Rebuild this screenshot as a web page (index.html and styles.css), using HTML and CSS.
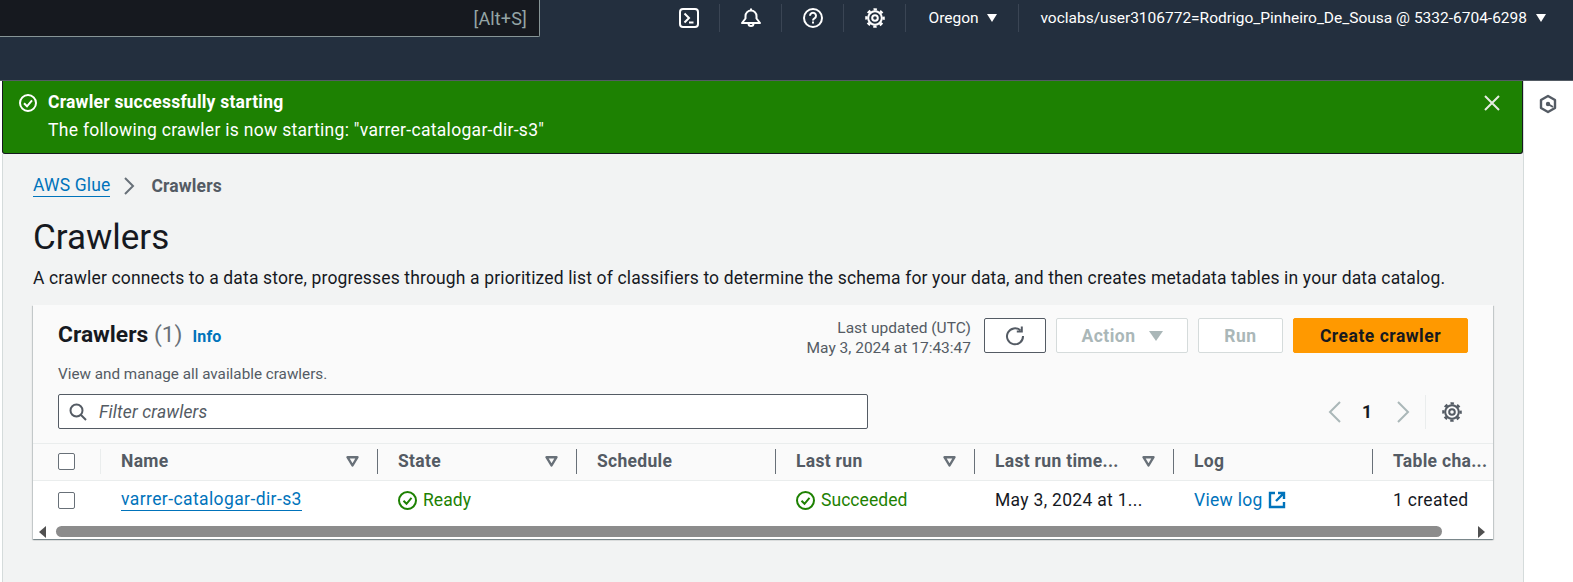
FILE: index.html
```html
<!DOCTYPE html>
<html lang="en">
<head>
    <meta charset="UTF-8">
    <meta name="viewport" content="width=device-width, initial-scale=1.0">
    <title>Crawlers | AWS Glue</title>
    <link rel="stylesheet" href="styles.css">
</head>
<body>

    <!-- Top nav -->
    <header class="top-nav">
        <div class="search-box"><span>[Alt+S]</span></div>
        <nav class="nav-items">
            <div class="nav-icon">
                <svg width="20" height="20" viewBox="0 0 20 20" fill="none" stroke="#fff" stroke-width="2"><rect x="1" y="1" width="18" height="18" rx="3"/><path d="M5.500 5.500l4.500 4.500-4.500 4.500M10 14.500h4.500"/></svg>
            </div>
            <div class="nav-icon">
                <svg width="20" height="20" viewBox="0 0 20 20" fill="none" stroke="#fff" stroke-width="2"><path d="M1 15h18l-3.500-4.500V8a5.500 5.500 0 0 0-11 0v2.500z" stroke-linejoin="round"/><path d="M7.500 15.500a2.500 2.500 0 0 0 5 0M10 .5v2"/></svg>
            </div>
            <div class="nav-icon">
                <svg width="20" height="20" viewBox="0 0 20 20" fill="none" stroke="#fff" stroke-width="2"><circle cx="10" cy="10" r="9"/><path d="M7 7.800a3 3 0 1 1 4.500 2.600c-1 .6-1.500 1.100-1.500 2.100"/><path d="M10 13.600v1.800"/></svg>
            </div>
            <div class="nav-icon">
                <svg width="20" height="20" viewBox="0 0 20 20" fill="none" stroke="#fff"><circle cx="10" cy="10" r="6.800" stroke-width="2"/><circle cx="10" cy="10" r="2.800" stroke-width="2"/><circle cx="10" cy="10" r="8.600" stroke-width="2.400" stroke-dasharray="3.400 3.350" stroke-dashoffset="1.700"/></svg>
            </div>
            <div class="nav-menu region">Oregon <span class="caret"></span></div>
            <div class="nav-menu account">voclabs/user3106772=Rodrigo_Pinheiro_De_Sousa @ 5332-6704-6298 <span class="caret"></span></div>
        </nav>
    </header>

    <div class="page">
        <div class="main-column">

            <!-- Flash message -->
            <div class="flash">
                <svg class="flash-icon" width="18" height="18" viewBox="0 0 18 18" fill="none" stroke="#fff" stroke-width="2"><circle cx="9" cy="9" r="8"/><path d="M5 9.300l3 3 5-6"/></svg>
                <div class="flash-text">
                    <div class="flash-title">Crawler successfully starting</div>
                    <div class="flash-body">The following crawler is now starting: "varrer-catalogar-dir-s3"</div>
                </div>
                <svg class="flash-close" width="16" height="16" viewBox="0 0 16 16" fill="none" stroke="#e6ece3" stroke-width="2"><path d="M1 1l14 14M15 1L1 15"/></svg>
            </div>

            <main class="content">
                <div class="breadcrumbs">
                    <a href="#" class="crumb-link">AWS Glue</a>
                    <svg width="12" height="18" viewBox="0 0 12 18" fill="none" stroke="#687078" stroke-width="2"><path d="M2 1l8 8-8 8"/></svg>
                    <span class="crumb-current">Crawlers</span>
                </div>

                <h1>Crawlers</h1>
                <p class="page-desc">A crawler connects to a data store, progresses through a prioritized list of classifiers to determine the schema for your data, and then creates metadata tables in your data catalog.</p>

                <section class="card">
                    <div class="card-head">
                        <div class="card-title-row">
                            <div class="card-title">
                                <h2>Crawlers <span class="count">(1)</span></h2>
                                <a href="#" class="info">Info</a>
                            </div>
                            <div class="card-actions">
                                <div class="updated">Last updated (UTC)<br>May 3, 2024 at 17:43:47</div>
                                <button class="btn btn-refresh" type="button">
                                    <svg width="20" height="20" viewBox="0 0 20 20" fill="none" stroke="#545b64" stroke-width="2"><path d="M15.500 4.500A8 8 0 1 0 18 10"/><path d="M16.800 .5v5h-5"/></svg>
                                </button>
                                <button class="btn btn-disabled btn-action" type="button">Action <span class="caret caret-grey"></span></button>
                                <button class="btn btn-disabled btn-run" type="button">Run</button>
                                <button class="btn btn-primary" type="button">Create crawler</button>
                            </div>
                        </div>
                        <div class="card-desc">View and manage all available crawlers.</div>
                        <div class="filter-row">
                            <div class="filter">
                                <svg width="18" height="18" viewBox="0 0 18 18" fill="none" stroke="#545b64" stroke-width="2"><circle cx="7.500" cy="7.500" r="6"/><path d="M12 12l5 5"/></svg>
                                <span>Filter crawlers</span>
                            </div>
                            <div class="pager">
                                <svg width="14" height="22" viewBox="0 0 14 22" fill="none" stroke="#aab7b8" stroke-width="2"><path d="M12 1L2 11l10 10"/></svg>
                                <span class="page-num">1</span>
                                <svg width="14" height="22" viewBox="0 0 14 22" fill="none" stroke="#aab7b8" stroke-width="2"><path d="M2 1l10 10L2 21"/></svg>
                                <div class="pager-settings">
                                    <svg width="20" height="20" viewBox="0 0 20 20" fill="none" stroke="#545b64"><circle cx="10" cy="10" r="6.800" stroke-width="2"/><circle cx="10" cy="10" r="2.800" stroke-width="2"/><circle cx="10" cy="10" r="8.600" stroke-width="2.400" stroke-dasharray="3.400 3.350" stroke-dashoffset="1.700"/></svg>
                                </div>
                            </div>
                        </div>
                    </div>

                    <div class="table-wrap">
                        <div class="row row-head">
                            <div class="cell cell-check"><span class="checkbox"></span></div>
                            <div class="cell cell-name">Name <svg class="sort" width="13" height="11" viewBox="0 0 13 11" fill="none" stroke="#687078" stroke-width="2.400"><path d="M1.500 1.200h10l-5 8.300z" stroke-linejoin="round"/></svg></div>
                            <div class="cell">State <svg class="sort" width="13" height="11" viewBox="0 0 13 11" fill="none" stroke="#687078" stroke-width="2.400"><path d="M1.500 1.200h10l-5 8.300z" stroke-linejoin="round"/></svg></div>
                            <div class="cell">Schedule</div>
                            <div class="cell">Last run <svg class="sort" width="13" height="11" viewBox="0 0 13 11" fill="none" stroke="#687078" stroke-width="2.400"><path d="M1.500 1.200h10l-5 8.300z" stroke-linejoin="round"/></svg></div>
                            <div class="cell">Last run time... <svg class="sort" width="13" height="11" viewBox="0 0 13 11" fill="none" stroke="#687078" stroke-width="2.400"><path d="M1.500 1.200h10l-5 8.300z" stroke-linejoin="round"/></svg></div>
                            <div class="cell">Log</div>
                            <div class="cell cell-last">Table cha...</div>
                        </div>
                        <div class="row row-body">
                            <div class="cell cell-check"><span class="checkbox"></span></div>
                            <div class="cell cell-name"><a href="#" class="crawler-link">varrer-catalogar-dir-s3</a></div>
                            <div class="cell status">
                                <svg width="19" height="19" viewBox="0 0 19 19" fill="none" stroke="#1d8102" stroke-width="2"><circle cx="9.500" cy="9.500" r="8.500"/><path d="M5.500 9.800l3 3 5-6"/></svg>
                                Ready
                            </div>
                            <div class="cell"></div>
                            <div class="cell status">
                                <svg width="19" height="19" viewBox="0 0 19 19" fill="none" stroke="#1d8102" stroke-width="2"><circle cx="9.500" cy="9.500" r="8.500"/><path d="M5.500 9.800l3 3 5-6"/></svg>
                                Succeeded
                            </div>
                            <div class="cell">May 3, 2024 at 1...</div>
                            <div class="cell">
                                <a href="#" class="log-link">View log
                                    <svg width="18" height="18" viewBox="0 0 18 18" fill="none" stroke="#0073bb" stroke-width="2.400"><path d="M7 2H2v14h14v-5"/><path d="M10 2h6v6M16 2L8 10"/></svg>
                                </a>
                            </div>
                            <div class="cell cell-last">1 created</div>
                        </div>
                        <div class="scroll-bar">
                            <span class="arrow arrow-left"></span>
                            <span class="thumb"></span>
                            <span class="arrow arrow-right"></span>
                        </div>
                    </div>
                </section>
            </main>
        </div>

        <!-- Right tools rail -->
        <aside class="tools-rail">
            <svg width="18" height="20" viewBox="0 0 18 20" fill="none" stroke="#545b64" stroke-width="2.400"><path d="M9 2l7 4v8l-7 4-7-4V6z" stroke-linejoin="round"/><circle cx="9" cy="10" r="2.200" fill="#545b64" stroke="none"/><path d="M9 10l5 3" stroke-width="2"/></svg>
        </aside>
    </div>

</body>
</html>
```

FILE: styles.css
```css
* {
    box-sizing: border-box;
}

html, body {
    height: 582px;
    overflow: hidden;
}

body {
    margin: 0;
    background: #fff;
    color: #16191f;
    font-family: Roboto, "Liberation Sans", sans-serif;
    font-size: 17.500px;
    letter-spacing: 0.15px;
}

a {
    color: #0073bb;
    text-decoration: none;
}

/* Top nav */
.top-nav {
    display: flex;
    justify-content: space-between;
    align-items: flex-start;
    height: 81px;
    background: #232f3e;
    border-bottom: 1px solid #545b64;
}

.search-box {
    display: flex;
    align-items: center;
    justify-content: flex-end;
    width: 540px;
    height: 37px;
    padding-right: 12px;
    background: #16191f;
    border-right: 1px solid #879596;
    border-bottom: 1px solid #879596;
    border-bottom-right-radius: 2px;
    color: #95a5a6;
    font-size: 18px;
}

.nav-items {
    display: flex;
    align-items: center;
    height: 36px;
    color: #fff;
    font-size: 15.500px;
    letter-spacing: 0;
}

.nav-icon {
    display: flex;
    align-items: center;
    justify-content: center;
    width: 62px;
    height: 28px;
    border-right: 1px solid #3a4554;
}

.nav-menu {
    display: flex;
    align-items: center;
    height: 28px;
    white-space: nowrap;
}

.region {
    gap: 8px;
    width: 113px;
    padding-left: 22px;
    border-right: 1px solid #3a4554;
}

.account {
    gap: 9px;
    padding: 0 27px 0 21px;
}

.caret {
    display: inline-block;
    width: 0;
    height: 0;
    border-left: 5px solid transparent;
    border-right: 5px solid transparent;
    border-top: 8px solid #fff;
}

.caret-grey {
    border-left-width: 7px;
    border-right-width: 7px;
    border-top: 10px solid #aab7b8;
    margin-left: 13px;
}

/* Page */
.page {
    display: flex;
    height: 501px;
}

.main-column {
    flex: 1;
    min-width: 0;
    padding-left: 2px;
}

.tools-rail {
    display: flex;
    justify-content: center;
    width: 50px;
    padding: 13px 2px 0 0;
    border-left: 1px solid #d5dbdb;
}

.flash {
    display: flex;
    align-items: flex-start;
    height: 73px;
    padding: 7px 22px 0 16px;
    background: #1d8102;
    border: 1px solid #16191f;
    border-top: 0;
    border-radius: 0 0 3px 3px;
    color: #fff;
    line-height: 28px;
}

.flash-icon {
    flex: none;
    margin: 6px 11px 0 0;
}

.flash-text {
    flex: 1;
}

.flash-title {
    font-weight: 700;
    letter-spacing: 0.22px;
}

.flash-body {
    letter-spacing: 0.3px;
}

.flash-close {
    flex: none;
    margin-top: 7px;
}

.content {
    height: 428px;
    padding: 20px 30px 0 30px;
    background: #f2f3f3;
    border-left: 1px solid #d5dbdb;
}

.breadcrumbs {
    display: flex;
    align-items: center;
    gap: 13px;
    height: 24px;
}

.crumb-link {
    border-bottom: 1px solid #0073bb;
    line-height: 21px;
}

.crumb-current {
    margin-left: 3px;
    color: #545b64;
    font-weight: 700;
}

h1 {
    margin: 18px 0 0;
    font-size: 35px;
    font-weight: 400;
    line-height: 44px;
    letter-spacing: 0;
}

.page-desc {
    margin: 6px 0 0;
    color: #16191f;
    line-height: 24px;
    white-space: nowrap;
}

/* Card */
.card {
    margin-top: 15px;
    height: 234px;
    background: #fafafa;
    box-shadow: 0 1px 1px 0 rgba(0, 28, 36, 0.3), 1px 1px 1px 0 rgba(0, 28, 36, 0.15), -1px 1px 1px 0 rgba(0, 28, 36, 0.15);
    overflow: hidden;
}

.card-head {
    height: 138px;
    padding: 13px 25px 0 25px;
}

.card-title-row {
    display: flex;
    justify-content: space-between;
    align-items: flex-start;
    height: 46px;
}

.card-title {
    display: flex;
    align-items: baseline;
    gap: 10px;
    padding-top: 2px;
}

h2 {
    margin: 0;
    font-size: 22.800px;
    font-weight: 700;
    line-height: 30px;
    letter-spacing: 0;
}

.count {
    color: #687078;
    font-weight: 400;
}

.info {
    font-size: 16px;
    font-weight: 700;
}

.card-actions {
    display: flex;
    align-items: flex-start;
    gap: 10px;
}

.updated {
    margin-right: 3px;
    color: #545b64;
    font-size: 15.500px;
    line-height: 20px;
    letter-spacing: 0;
    text-align: right;
}

.btn {
    display: flex;
    align-items: center;
    justify-content: center;
    height: 35px;
    border-radius: 2px;
    font-family: inherit;
    font-size: 17.500px;
    font-weight: 700;
    letter-spacing: 0.5px;
    background: #fff;
}

.btn-refresh {
    width: 62px;
    border: 1px solid #545b64;
}

.btn-disabled {
    border: 1px solid #d5dbdb;
    color: #aab7b8;
}

.btn-action {
    width: 132px;
}

.btn-run {
    width: 85px;
}

.btn-primary {
    width: 175px;
    border: 1px solid #ff9900;
    background: #ff9900;
    color: #16191f;
}

.card-desc {
    color: #545b64;
    font-size: 15.250px;
    line-height: 20px;
    letter-spacing: 0;
}

.filter-row {
    display: flex;
    justify-content: space-between;
    align-items: center;
    margin-top: 10px;
}

.filter {
    display: flex;
    align-items: center;
    gap: 12px;
    width: 810px;
    height: 35px;
    padding-left: 10px;
    background: #fff;
    border: 1px solid #545b64;
    border-radius: 2px;
    color: #545b64;
    font-style: italic;
}

.pager {
    display: flex;
    align-items: center;
    margin-right: 6px;
}

.page-num {
    width: 54px;
    padding-right: 4px;
    font-weight: 700;
    text-align: center;
}

.pager-settings {
    display: flex;
    align-items: center;
    height: 34px;
    margin-left: 15px;
    padding-left: 16px;
    border-left: 1px solid #eaeded;
}

/* Table */
.table-wrap {
    background: #fff;
    border-top: 1px solid #eaeded;
}

.row {
    display: grid;
    grid-template-columns: 68px 277px 199px 199px 199px 199px 199px 120px;
    align-items: center;
}

.row-head {
    height: 37px;
    padding-bottom: 2px;
    background: #fafafa;
    border-bottom: 1px solid #eaeded;
    color: #545b64;
    font-weight: 700;
    letter-spacing: 0.3px;
}

.row-body {
    height: 43px;
    padding-bottom: 5px;
    letter-spacing: 0.3px;
}

.cell {
    display: flex;
    align-items: center;
    justify-content: space-between;
    height: 25px;
    padding: 0 18px 0 20px;
    border-right: 1px solid #687078;
    white-space: nowrap;
    overflow: hidden;
}

.row-body .cell {
    justify-content: flex-start;
    border-right: 0;
}

.cell-check {
    padding: 0 0 0 25px;
    border-right: 1px solid #eaeded;
}

.cell-last {
    padding-right: 0;
    border-right: 0;
}

.checkbox {
    display: block;
    width: 17px;
    height: 17px;
    background: #fff;
    border: 1px solid #687078;
    border-radius: 2px;
}

.sort {
    flex: none;
}

.crawler-link {
    border-bottom: 1px solid #0073bb;
    line-height: 21px;
    letter-spacing: 0.4px;
}

.status {
    gap: 6px;
    letter-spacing: 0.05px;
    color: #1d8102;
}

.log-link {
    display: flex;
    align-items: center;
    gap: 5px;
}

.scroll-bar {
    display: flex;
    align-items: center;
    height: 15px;
    padding: 0 8px 0 6px;
    gap: 10px;
}

.thumb {
    flex: 1;
    height: 11px;
    background: #8c8c8c;
    border-radius: 6px;
    margin-right: 26px;
}

.arrow {
    width: 0;
    height: 0;
    border-top: 6px solid transparent;
    border-bottom: 6px solid transparent;
}

.arrow-left {
    border-right: 7px solid #505050;
}

.arrow-right {
    border-left: 7px solid #505050;
}
```
